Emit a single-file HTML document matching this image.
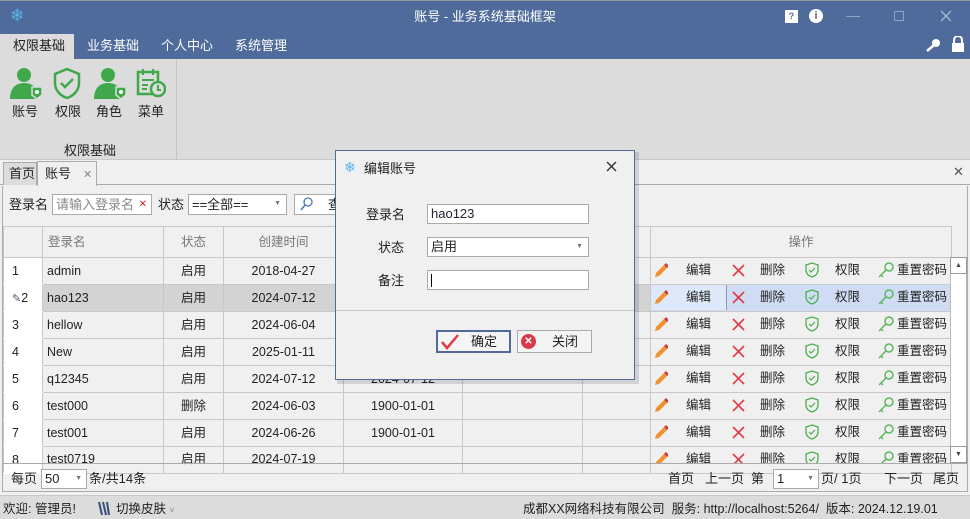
<!DOCTYPE html>
<html><head><meta charset="utf-8"><style>
*{box-sizing:border-box;margin:0;padding:0}
body{width:970px;height:519px;overflow:hidden;background:#f0f0f0;font-family:"Liberation Sans","Noto Sans CJK SC",sans-serif;font-size:13px;line-height:16px;color:#222;position:relative}
.a{position:absolute;line-height:16px}
.title{left:0;top:0;width:970px;height:32px;background:#4e6b9b;border-top:1px solid #999;color:#fff}
.menu{left:0;top:32px;width:970px;height:27px;background:#4e6b9b;color:#fff;font-size:13px}
.menu span{position:absolute;top:6px}
.ribbon{left:0;top:59px;width:970px;height:101px;background:#dcdcdc;border-bottom:1px solid #c8c8c8}
.rb span{position:absolute;top:45px;font-size:13px}
table{border-collapse:collapse;table-layout:fixed}
td{border:1px solid #c8c8c8;height:27px;white-space:nowrap;overflow:hidden;font-size:12.5px;line-height:16px;padding-top:0;padding-bottom:0}
.g td{background:#f0f0f0}
.g td.n{background:#fff;padding-left:8px;border-color:#fff #c8c8c8 #fff #c8c8c8}
.c{text-align:center}
.op{font-size:12.5px}
.inp{background:#fff;border:1px solid #aaa;position:absolute;white-space:nowrap;overflow:hidden}
</style></head><body>
<div class="a title">
 <div class="a" style="left:10px;top:7px;color:#5ab4e8;font-size:17px">❄</div>
 <div class="a" style="left:0;width:970px;top:8px;text-align:center;font-size:13px">账号 - 业务系统基础框架</div>
 <div class="a" style="left:785px;top:9px;width:13px;height:13px;background:#fff;color:#4e6b9b;font-size:9px;text-align:center;line-height:13px;font-weight:bold">?</div>
 <div class="a" style="left:809px;top:8px;width:14px;height:14px;border-radius:50%;background:#fff;color:#4e6b9b;font-size:11px;text-align:center;line-height:14px;font-weight:bold">i</div>
 <div class="a" style="left:846px;top:15px;width:14px;height:1px;background:#8fa3c4"></div>
 <div class="a" style="left:894px;top:10px;width:10px;height:10px;border:1px solid #8fa3c4"></div>
 <svg class="a" style="left:940px;top:9px" width="12" height="12" viewBox="0 0 12 12"><path d="M1 1l10 10M11 1L1 11" stroke="#a9b8d2" stroke-width="1.3"/></svg>
</div>
<div class="a menu">
 <div class="a" style="left:0;top:2px;width:74px;height:25px;background:#dcdcdc"></div>
 <span style="left:13px;color:#222">权限基础</span>
 <span style="left:87px">业务基础</span><span style="left:161px">个人中心</span><span style="left:235px">系统管理</span>
 <svg class="a" style="left:925px;top:6px" width="16" height="14" viewBox="0 0 16 14"><circle cx="11" cy="5" r="4" fill="#fff"/><path d="M9 7L2 13" stroke="#fff" stroke-width="2.5"/></svg>
 <svg class="a" style="left:951px;top:4px" width="14" height="16" viewBox="0 0 14 16"><path d="M3 7V4a4 4 0 0 1 8 0v3" stroke="#fff" stroke-width="2" fill="none"/><rect x="1" y="7" width="12" height="9" fill="#fff"/></svg>
</div>
<div class="a ribbon rb">
 <svg class="a" style="left:8px;top:8px" width="34" height="32" viewBox="0 0 34 32"><circle cx="16" cy="8" r="7" fill="#3fa84a"/><path d="M2 32c0-12 7-16 14-16s10 3 12 6v10z" fill="#3fa84a"/><path d="M24 20h10v8l-5 4-5-4z" fill="#3fa84a" stroke="#dcdcdc" stroke-width="1.5"/><circle cx="29" cy="25" r="2" fill="#fff"/></svg>
 <svg class="a" style="left:52px;top:8px" width="30" height="32" viewBox="0 0 30 32"><path d="M15 2l12 5v9c0 8-6 13-12 15C9 29 3 24 3 16V7z" fill="none" stroke="#3fa84a" stroke-width="2.5"/><path d="M9 16l4 4 8-8" fill="none" stroke="#3fa84a" stroke-width="2.5"/></svg>
 <svg class="a" style="left:92px;top:8px" width="34" height="32" viewBox="0 0 34 32"><circle cx="16" cy="8" r="7" fill="#3fa84a"/><path d="M2 32c0-12 7-16 14-16s10 3 12 6v10z" fill="#3fa84a"/><path d="M24 20h10v8l-5 4-5-4z" fill="#3fa84a" stroke="#dcdcdc" stroke-width="1.5"/><circle cx="29" cy="25" r="2" fill="#fff"/></svg>
 <svg class="a" style="left:136px;top:9px" width="30" height="30" viewBox="0 0 30 30"><rect x="2" y="4" width="20" height="22" fill="none" stroke="#3fa84a" stroke-width="2.5"/><path d="M7 1v6M17 1v6M6 12h12M6 17h6M6 21h5" stroke="#3fa84a" stroke-width="2"/><circle cx="22" cy="21" r="7" fill="#dcdcdc" stroke="#3fa84a" stroke-width="2.5"/><path d="M22 17v5h3" stroke="#3fa84a" stroke-width="2" fill="none"/></svg>
 <span style="left:12px">账号</span><span style="left:55px">权限</span><span style="left:96px">角色</span><span style="left:138px">菜单</span>
 <span style="left:64px;top:84px">权限基础</span>
 <div class="a" style="left:176px;top:0;width:1px;height:100px;background:#c4c4c4"></div>
</div>
<!-- tabs -->
<div class="a" style="left:0;top:160px;width:970px;height:25px;background:#f0f0f0;border-bottom:1px solid #aaa"></div>
<div class="a" style="left:3px;top:162px;width:34px;height:23px;background:#dcdcdc;border:1px solid #aaa;border-bottom:none;padding:3px 0 0 5px">首页</div>
<div class="a" style="left:37px;top:161px;width:60px;height:25px;background:#f0f0f0;border:1px solid #aaa;border-bottom:none;padding:4px 0 0 7px">账号<span style="color:#888;font-size:11px;margin-left:12px">✕</span></div>
<div class="a" style="left:953px;top:164px;color:#555;font-size:13px">✕</div>
<div class="a" style="left:2px;top:186px;width:966px;height:306px;border:1px solid #aaa;border-top:none"></div>
<!-- filter -->
<div class="a" style="left:9px;top:197px">登录名</div>
<div class="inp" style="left:52px;top:194px;width:100px;height:21px;color:#888;padding:2px 0 0 3px">请输入登录名<span style="color:#d22;font-size:10px;position:absolute;right:4px;top:2px">✕</span></div>
<div class="a" style="left:158px;top:197px">状态</div>
<div class="inp" style="left:188px;top:194px;width:99px;height:21px;padding:2px 0 0 3px">==全部==<span style="color:#777;font-size:7px;position:absolute;right:5px;top:1px">▼</span></div>
<div class="inp" style="left:294px;top:194px;width:45px;height:21px;padding:2px 0 0 5px;color:#4a78b0"><svg width="14" height="14" viewBox="0 0 14 14" style="vertical-align:-2px"><circle cx="8" cy="5" r="4" fill="none" stroke="#4a78b0" stroke-width="1.3"/><path d="M5 8l-4 5" stroke="#4a78b0" stroke-width="1.5"/></svg><span style="color:#222;margin-left:14px;position:absolute;left:19px;top:2px">查</span></div>
<!-- grid -->
<div class="a" style="left:3px;top:226px">
<table class="g" style="width:948px">
<colgroup><col style="width:39px"><col style="width:121px"><col style="width:60px"><col style="width:120px"><col style="width:119px"><col style="width:120px"><col style="width:68px"><col style="width:301px"></colgroup>
<tr style="height:31px"><td style="border-color:#c8c8c8;height:31px"></td><td style="color:#777;padding-left:5px">登录名</td><td class="c" style="color:#777">状态</td><td class="c" style="color:#777">创建时间</td><td></td><td></td><td></td><td class="c" style="color:#777">操作</td></tr>
<tr><td class="n">1</td><td style="padding-left:4px">admin</td><td class="c">启用</td><td class="c">2018-04-27</td><td></td><td></td><td></td><td></td></tr>
<tr><td class="n"><span style="color:#557;font-size:11px">✎</span>2</td><td style="padding-left:4px;background:#d3d3d3">hao123</td><td class="c" style="background:#d3d3d3">启用</td><td class="c" style="background:#d3d3d3">2024-07-12</td><td style="background:#d3d3d3"></td><td style="background:#d3d3d3"></td><td style="background:#d3d3d3"></td><td style="background:#cfdcf3"></td></tr>
<tr><td class="n">3</td><td style="padding-left:4px">hellow</td><td class="c">启用</td><td class="c">2024-06-04</td><td></td><td></td><td></td><td></td></tr>
<tr><td class="n">4</td><td style="padding-left:4px">New</td><td class="c">启用</td><td class="c">2025-01-11</td><td></td><td></td><td></td><td></td></tr>
<tr><td class="n">5</td><td style="padding-left:4px">q12345</td><td class="c">启用</td><td class="c">2024-07-12</td><td class="c">2024-07-12</td><td></td><td></td><td></td></tr>
<tr><td class="n">6</td><td style="padding-left:4px">test000</td><td class="c">删除</td><td class="c">2024-06-03</td><td class="c">1900-01-01</td><td></td><td></td><td></td></tr>
<tr><td class="n">7</td><td style="padding-left:4px">test001</td><td class="c">启用</td><td class="c">2024-06-26</td><td class="c">1900-01-01</td><td></td><td></td><td></td></tr>
<tr><td class="n" style="height:17px;vertical-align:top;padding-top:5px">8</td><td style="height:17px;padding-left:4px;vertical-align:top;padding-top:4px">test0719</td><td class="c" style="vertical-align:top;padding-top:4px">启用</td><td class="c" style="vertical-align:top;padding-top:4px">2024-07-19</td><td></td><td></td><td></td><td></td></tr>
</table></div>
<div class="a" style="left:651px;top:285px;width:76px;height:25px;background:#dde8f8;border-right:1px solid #999"></div>
<!-- ops columns -->
<div class="a op" style="left:652px;top:257px;width:298px;height:206px;overflow:hidden">
<div class="a" style="left:0;top:0"><svg width="16" height="220" viewBox="0 0 16 220"><g id="p"><path d="M3 20l1-4 8-8 3 3-8 8z" fill="#f0922f"/><path d="M12 8l2-2 3 3-2 2z" fill="#d03a3a"/></g><use href="#p" y="27"/><use href="#p" y="54"/><use href="#p" y="81"/><use href="#p" y="108"/><use href="#p" y="135"/><use href="#p" y="162"/><use href="#p" y="189"/></svg></div>
<div class="a" style="left:78px;top:0"><svg width="16" height="220" viewBox="0 0 16 220"><g id="x"><path d="M3 8l11 11M14 8L3 19" stroke="#e03a45" stroke-width="1.6"/></g><use href="#x" y="27"/><use href="#x" y="54"/><use href="#x" y="81"/><use href="#x" y="108"/><use href="#x" y="135"/><use href="#x" y="162"/><use href="#x" y="189"/></svg></div>
<div class="a" style="left:152px;top:0"><svg width="16" height="220" viewBox="0 0 16 220"><g id="s"><path d="M8 6l6 2v5c0 4-3 6-6 7-3-1-6-3-6-7V8z" fill="none" stroke="#4caf50" stroke-width="1.3"/><path d="M5 13l2 2 4-4" fill="none" stroke="#4caf50" stroke-width="1.2"/></g><use href="#s" y="27"/><use href="#s" y="54"/><use href="#s" y="81"/><use href="#s" y="108"/><use href="#s" y="135"/><use href="#s" y="162"/><use href="#s" y="189"/></svg></div>
<div class="a" style="left:225px;top:0"><svg width="18" height="220" viewBox="0 0 18 220"><g id="k"><circle cx="12" cy="10" r="4" fill="none" stroke="#5cb85c" stroke-width="1.5"/><path d="M9 13l-7 7M4 18l2 2" stroke="#5cb85c" stroke-width="1.5"/></g><use href="#k" y="27"/><use href="#k" y="54"/><use href="#k" y="81"/><use href="#k" y="108"/><use href="#k" y="135"/><use href="#k" y="162"/><use href="#k" y="189"/></svg></div>
<div class="a" style="left:34px;top:0;line-height:27px">编辑<br>编辑<br>编辑<br>编辑<br>编辑<br>编辑<br>编辑<br>编辑</div>
<div class="a" style="left:108px;top:0;line-height:27px">删除<br>删除<br>删除<br>删除<br>删除<br>删除<br>删除<br>删除</div>
<div class="a" style="left:183px;top:0;line-height:27px">权限<br>权限<br>权限<br>权限<br>权限<br>权限<br>权限<br>权限</div>
<div class="a" style="left:245px;top:0;line-height:27px">重置密码<br>重置密码<br>重置密码<br>重置密码<br>重置密码<br>重置密码<br>重置密码<br>重置密码</div>
</div>
<!-- scrollbar -->
<div class="a" style="left:950px;top:257px;width:17px;height:206px;background:#fff;border:1px solid #bbb"></div>
<div class="a" style="left:950px;top:257px;width:17px;height:17px;border:1px solid #999;font-size:7px;text-align:center;line-height:15px;color:#444">▲</div>
<div class="a" style="left:950px;top:446px;width:17px;height:17px;border:1px solid #999;font-size:7px;text-align:center;line-height:15px;color:#444;background:#fff">▼</div>
<div class="a" style="left:3px;top:463px;width:964px;height:1px;background:#aaa"></div>
<!-- pager -->
<div class="a" style="left:11px;top:471px">每页</div>
<div class="inp" style="left:41px;top:469px;width:46px;height:20px;padding:1px 0 0 3px">50<span style="color:#777;font-size:7px;position:absolute;right:4px;top:1px">▼</span></div>
<div class="a" style="left:89px;top:471px">条/共14条</div>
<div class="a" style="left:668px;top:471px">首页</div>
<div class="a" style="left:705px;top:471px">上一页</div>
<div class="a" style="left:751px;top:471px">第</div>
<div class="inp" style="left:773px;top:469px;width:46px;height:20px;padding:1px 0 0 3px">1<span style="color:#777;font-size:7px;position:absolute;right:4px;top:1px">▼</span></div>
<div class="a" style="left:821px;top:471px">页/ 1页</div>
<div class="a" style="left:884px;top:471px">下一页</div>
<div class="a" style="left:933px;top:471px">尾页</div>
<!-- status -->
<div class="a" style="left:0;top:495px;width:970px;height:24px;background:#dcdcdc;border-top:1px solid #c8c8c8"></div>
<div class="a" style="left:3px;top:501px;font-size:12.5px">欢迎: 管理员!</div>
<svg class="a" style="left:97px;top:501px" width="14" height="15" viewBox="0 0 14 15"><path d="M2 1l3 13M6 1l3 13M10 1l2 13" stroke="#3a4e7a" stroke-width="2"/></svg>
<div class="a" style="left:116px;top:501px;font-size:12.5px">切换皮肤 <span style="color:#888;font-size:9px">˅</span></div>
<div class="a" style="left:523px;top:501px;font-size:12.5px">成都XX网络科技有限公司&nbsp; 服务: http://localhost:5264/&nbsp; 版本: 2024.12.19.01</div>
<!-- dialog -->
<div class="a" style="left:337px;top:152px;width:302px;height:232px;background:rgba(0,0,0,0.12)"></div>
<div class="a" style="left:335px;top:150px;width:300px;height:230px;background:#f0f0f0;border:1px solid #4e6b9b">
 <div class="a" style="left:8px;top:8px;color:#5ab4e8;font-size:14px">❄</div>
 <div class="a" style="left:28px;top:10px">编辑账号</div>
 <svg class="a" style="left:270px;top:10px" width="11" height="11" viewBox="0 0 11 11"><path d="M1 1l9 9M10 1L1 10" stroke="#333" stroke-width="1.4"/></svg>
 <div class="a" style="left:30px;top:56px">登录名</div>
 <div class="inp" style="left:91px;top:53px;width:162px;height:20px;padding:1px 0 0 3px;color:#223">hao123</div>
 <div class="a" style="left:42px;top:89px">状态</div>
 <div class="inp" style="left:91px;top:86px;width:162px;height:20px;padding:1px 0 0 3px">启用<span style="color:#777;font-size:7px;position:absolute;right:5px;top:1px">▼</span></div>
 <div class="a" style="left:42px;top:122px">备注</div>
 <div class="inp" style="left:91px;top:119px;width:162px;height:20px"><div class="a" style="left:3px;top:3px;width:1px;height:13px;background:#000"></div></div>
 <div class="a" style="left:0;top:159px;width:298px;height:1px;background:#c8c8c8"></div>
 <div class="a" style="left:100px;top:179px;width:75px;height:23px;border:2px solid #4e6b9b;background:#f4f4f4"><svg style="position:absolute;left:2px;top:1px" width="20" height="18" viewBox="0 0 20 18"><path d="M2 9l5 6L18 2" fill="none" stroke="#e03a45" stroke-width="2.5"/></svg><span style="position:absolute;left:33px;top:2px">确定</span></div>
 <div class="a" style="left:181px;top:179px;width:75px;height:23px;border:1px solid #aaa;background:#f4f4f4"><span style="position:absolute;left:3px;top:3px;width:15px;height:15px;border-radius:50%;background:#d63a48;color:#fff;font-size:10px;text-align:center;line-height:15px;font-weight:bold">✕</span><span style="position:absolute;left:34px;top:3px">关闭</span></div>
</div>
</body></html>
